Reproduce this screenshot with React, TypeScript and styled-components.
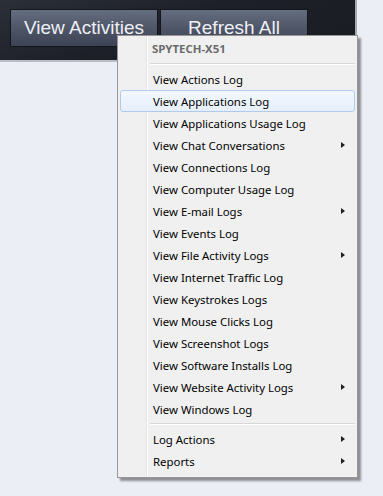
import styled, { createGlobalStyle } from 'styled-components';

const GlobalStyle = createGlobalStyle`
    body {
        margin: 0;
        background: #ebeef5;
        font-family: "Noto Sans", "Liberation Sans", sans-serif;
    }
`;

const Page = styled.div`
    position: relative;
    width: 383px;
    height: 496px;
    overflow: hidden;
`;

const TopBar = styled.div`
    box-sizing: border-box;
    width: 357px;
    height: 62px;
    display: flex;
    gap: 2px;
    padding: 9px 0 0 10px;
    background: linear-gradient(160deg, #2b2f38 0%, #1d2028 45%, #1a1c23 100%);
    border-right: 2px solid #a6a9b0;
    border-bottom: 2px solid #b9bcc3;
`;

const ToolButton = styled.button<{ $width: number }>`
    box-sizing: border-box;
    width: ${(p) => p.$width}px;
    height: 38px;
    padding: 0;
    border: 1px solid #14161b;
    background: linear-gradient(#656d80 0%, #4f5668 50%, #3d4354 100%);
    color: #eef0f5;
    font-family: "Liberation Sans", Arial, sans-serif;
    font-size: 19px;
    text-align: center;
`;

const Menu = styled.div`
    position: absolute;
    left: 117px;
    top: 35px;
    box-sizing: border-box;
    width: 241px;
    padding: 1px 2px 5px 2px;
    border: 1px solid #979797;
    background: linear-gradient(
        to right,
        #f0f0f0 28px,
        #e2e3e3 28px,
        #e2e3e3 29px,
        #ffffff 29px,
        #ffffff 30px,
        #f0f0f0 30px
    );
    box-shadow: 3px 3px 2px rgba(0, 0, 0, 0.4);
    font-size: 11.4px;
    color: #000;
`;

const Header = styled.div`
    height: 22px;
    margin-bottom: 1px;
    display: flex;
    align-items: center;
    padding-left: 32px;
    font-weight: 700;
    color: #6b6b6b;
`;

const Separator = styled.div`
    height: 8px;
    margin-left: 30px;
    display: flex;
    align-items: center;

    &::before {
        content: '';
        flex: 1;
        height: 1px;
        background: #d7d7d7;
        border-bottom: 1px solid #ffffff;
    }
`;

const Item = styled.div<{ $active?: boolean }>`
    box-sizing: border-box;
    height: 22px;
    display: flex;
    align-items: center;
    justify-content: space-between;
    padding: 0 9px 0 32px;
    border: 1px solid ${(p) => (p.$active ? '#aecbef' : 'transparent')};
    border-radius: 3px;
    background: ${(p) =>
        p.$active ? 'linear-gradient(#f3f8fe, #e6effb)' : 'transparent'};
`;

const Arrow = styled.span`
    width: 0;
    height: 0;
    border-left: 4px solid #202020;
    border-top: 3.5px solid transparent;
    border-bottom: 3.5px solid transparent;
`;

const logItems: { label: string; sub?: boolean }[] = [
    { label: 'View Actions Log' },
    { label: 'View Applications Log' },
    { label: 'View Applications Usage Log' },
    { label: 'View Chat Conversations', sub: true },
    { label: 'View Connections Log' },
    { label: 'View Computer Usage Log' },
    { label: 'View E-mail Logs', sub: true },
    { label: 'View Events Log' },
    { label: 'View File Activity Logs', sub: true },
    { label: 'View Internet Traffic Log' },
    { label: 'View Keystrokes Logs' },
    { label: 'View Mouse Clicks Log' },
    { label: 'View Screenshot Logs' },
    { label: 'View Software Installs Log' },
    { label: 'View Website Activity Logs', sub: true },
    { label: 'View Windows Log' },
];

export default function App() {
    return (
        <Page>
            <GlobalStyle />
            <TopBar>
                <ToolButton $width={148}>View Activities</ToolButton>
                <ToolButton $width={148}>Refresh All</ToolButton>
            </TopBar>

            <Menu>
                <Header>SPYTECH-X51</Header>
                <Separator />
                {logItems.map((item) => (
                    <Item key={item.label} $active={item.label === 'View Applications Log'}>
                        <span>{item.label}</span>
                        {item.sub && <Arrow />}
                    </Item>
                ))}
                <Separator />
                <Item>
                    <span>Log Actions</span>
                    <Arrow />
                </Item>
                <Item>
                    <span>Reports</span>
                    <Arrow />
                </Item>
            </Menu>
        </Page>
    );
}
